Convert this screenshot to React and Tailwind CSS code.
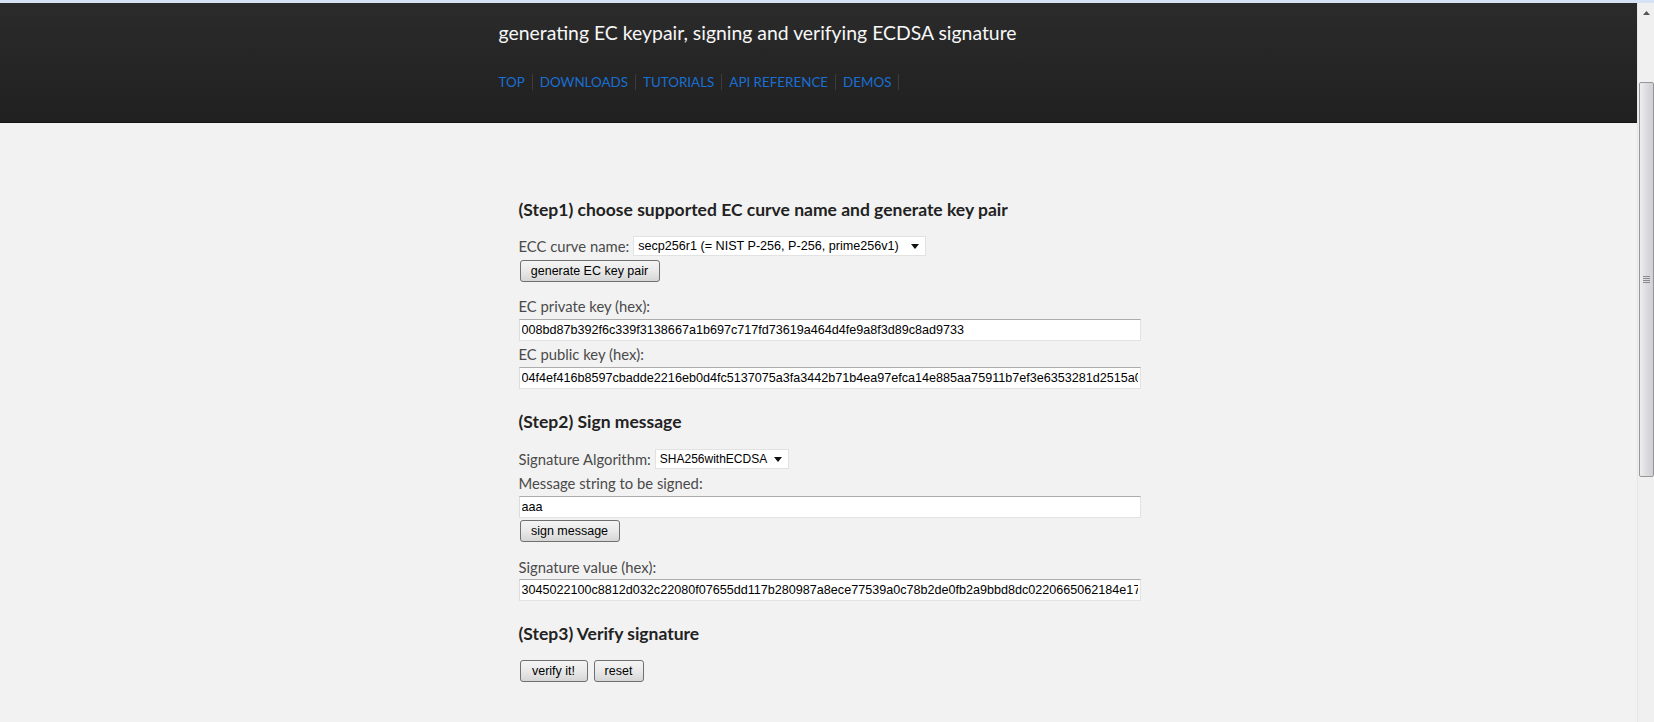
import React from 'react';

// Static data for the demo form
const NAV = ['TOP', 'DOWNLOADS', 'TUTORIALS', 'API REFERENCE', 'DEMOS'];
const PRV = '008bd87b392f6c339f3138667a1b697c717fd73619a464d4fe9a8f3d89c8ad9733';
const PUB = '04f4ef416b8597cbadde2216eb0d4fc5137075a3fa3442b71b4ea97efca14e885aa75911b7ef3e6353281d2515a0c8a1b2c3d4e5f60718293a4b5c6d7e8f9';
const SIG = '3045022100c8812d032c22080f07655dd117b280987a8ece77539a0c78b2de0fb2a9bbd8dc0220665062184e17a9b8c7d6e5f4a3b2c1d0e9f8a7b6c5d4e3f2a1b0';

const ctrlFont = { fontFamily: '"Liberation Sans", Arial, sans-serif' };

// Windows 7 style push button
const Btn = ({ w, children }) => (
  <button
    className={`${w} h-[22px] rounded-[3px] border border-[#707070] bg-linear-to-b from-[#f4f4f4] via-[#e9e9e9] to-[#d6d6d6] text-[12.5px] leading-none text-black`}
    style={ctrlFont}
  >
    {children}
  </button>
);

// select box look-alike
const Select = ({ w, size = 'text-[12.6px]', children }) => (
  <div
    className={`${w} ${size} h-[20px] flex items-center justify-between bg-white border border-[#e2e2e2] pl-[4px] pr-[6px] text-black`}
    style={ctrlFont}
  >
    <span className="whitespace-nowrap">{children}</span>
    <svg className="shrink-0" width="8" height="5" viewBox="0 0 8 5"><path d="M0 0h8L4 5z" fill="#111" /></svg>
  </div>
);

const Field = ({ value, mt = 'mt-[3px]' }) => (
  <input
    readOnly
    value={value}
    className={`${mt} block w-[622px] h-[22px] bg-white border border-[#e3e3e3] border-t-[#acacac] border-l-[#dcdcdc] px-[2px] text-[12.6px] text-black outline-none`}
    style={ctrlFont}
  />
);

const Label = ({ mt, children }) => (
  <div className={`${mt} h-[20px] leading-[20px] text-[14.8px] text-[#4a4a4a]`}>{children}</div>
);

const Heading = ({ mt, children }) => (
  <h3 className={`${mt} h-[24px] leading-[24px] text-[17.5px] font-bold text-[#222]`}>{children}</h3>
);

export default function App() {
  return (
    <div className="h-[722px] overflow-hidden bg-[#f2f2f2] flex flex-col" style={{ fontFamily: 'Lato, "Liberation Sans", sans-serif' }}>
      <div className="h-[3px] bg-[#d5e3f4] shrink-0" />
      <div className="flex flex-1 min-h-0">
        <div className="flex-1 min-w-0">
          {/* header */}
          <header className="h-[120px] bg-linear-to-b from-[#2b2b2b] to-[#202020] border-b border-[#141414]">
            <div className="w-[640px] mx-auto pt-[18px]">
              <h1 className="h-[24px] leading-[24px] text-[19.4px] text-[#f7f7f7] whitespace-nowrap">
                generating EC keypair, signing and verifying ECDSA signature
              </h1>
              <nav className="mt-[27px] flex items-center h-[20px] text-[13.4px]">
                {NAV.map((n) => (
                  <React.Fragment key={n}>
                    <a className="text-[#1a6fd3] whitespace-nowrap">{n}</a>
                    <span className="mx-[7px] w-px h-[16px] bg-[#3c3c3c]" />
                  </React.Fragment>
                ))}
              </nav>
            </div>
          </header>

          {/* form */}
          <div className="w-[640px] mx-auto pl-[20px] pt-[75px]">
            <Heading mt="mt-0">(Step1) choose supported EC curve name and generate key pair</Heading>
            <div className="mt-[14px] flex items-center gap-[4px] h-[20px]">
              <span className="text-[14.8px] text-[#4a4a4a]">ECC curve name:</span>
              <Select w="w-[293px]">secp256r1 (= NIST P-256, P-256, prime256v1)</Select>
            </div>
            <div className="mt-[4px] pl-px flex">
              <Btn w="w-[140px]">generate EC key pair</Btn>
            </div>
            <Label mt="mt-[14px]">EC private key (hex):</Label>
            <Field value={PRV} />
            <Label mt="mt-[3px]">EC public key (hex):</Label>
            <Field value={PUB} />

            <Heading mt="mt-[21px]">(Step2) Sign message</Heading>
            <div className="mt-[15px] flex items-center gap-[4px] h-[20px]">
              <span className="text-[14.8px] text-[#4a4a4a]">Signature Algorithm:</span>
              <Select w="w-[134px]" size="text-[12px]">SHA256withECDSA</Select>
            </div>
            <Label mt="mt-[4px]">Message string to be signed:</Label>
            <Field value="aaa" mt="mt-[3px]" />
            <div className="mt-[2px] pl-px flex">
              <Btn w="w-[100px]">sign message</Btn>
            </div>
            <Label mt="mt-[15px]">Signature value (hex):</Label>
            <Field value={SIG} mt="mt-[2px]" />

            <Heading mt="mt-[21px]">(Step3) Verify signature</Heading>
            <div className="mt-[14px] pl-px flex gap-[6px]">
              <Btn w="w-[68px]">verify it!</Btn>
              <Btn w="w-[50px]">reset</Btn>
            </div>
          </div>
        </div>

        {/* scrollbar */}
        <div className="w-[17px] shrink-0 bg-[#f0f0f0] border-l border-[#e6e6e6] flex flex-col items-center">
          <svg className="mt-[8px]" width="7" height="4" viewBox="0 0 7 4"><path d="M0 4L3.5 0L7 4z" fill="#555" /></svg>
          <div className="mt-[67px] w-[15px] h-[395px] rounded-[2px] border border-[#979797] bg-linear-to-r from-[#eeeef0] via-[#dcdce0] to-[#cfcfd4] flex items-center justify-center">
            <div className="flex flex-col gap-[1px]">
              <div className="w-[7px] h-px bg-[#8a8a8a]" />
              <div className="w-[7px] h-px bg-[#8a8a8a]" />
              <div className="w-[7px] h-px bg-[#8a8a8a]" />
              <div className="w-[7px] h-px bg-[#8a8a8a]" />
            </div>
          </div>
        </div>
      </div>
    </div>
  );
}
